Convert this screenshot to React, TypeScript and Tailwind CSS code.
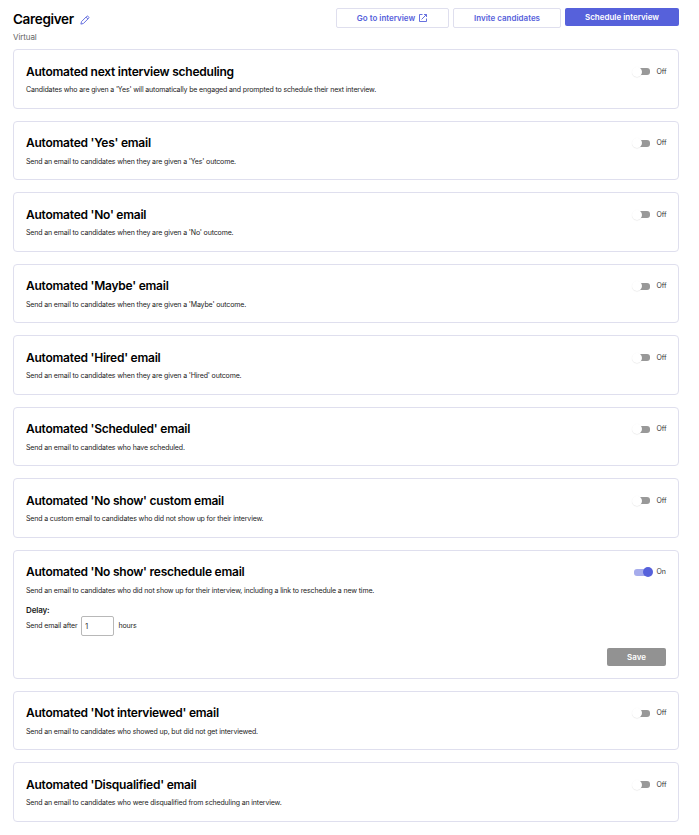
import { useState } from "react";

interface Automation {
  title: string;
  description: string;
  enabled?: boolean;
  delay?: string;
}

const automations: Automation[] = [
  {
    title: "Automated next interview scheduling",
    description:
      "Candidates who are given a 'Yes' will automatically be engaged and prompted to schedule their next interview.",
  },
  {
    title: "Automated 'Yes' email",
    description: "Send an email to candidates when they are given a 'Yes' outcome.",
  },
  {
    title: "Automated 'No' email",
    description: "Send an email to candidates when they are given a 'No' outcome.",
  },
  {
    title: "Automated 'Maybe' email",
    description: "Send an email to candidates when they are given a 'Maybe' outcome.",
  },
  {
    title: "Automated 'Hired' email",
    description: "Send an email to candidates when they are given a 'Hired' outcome.",
  },
  {
    title: "Automated 'Scheduled' email",
    description: "Send an email to candidates who have scheduled.",
  },
  {
    title: "Automated 'No show' custom email",
    description: "Send a custom email to candidates who did not show up for their interview.",
  },
  {
    title: "Automated 'No show' reschedule email",
    description:
      "Send an email to candidates who did not show up for their interview, including a link to reschedule a new time.",
    enabled: true,
    delay: "1",
  },
  {
    title: "Automated 'Not interviewed' email",
    description: "Send an email to candidates who showed up, but did not get interviewed.",
  },
  {
    title: "Automated 'Disqualified' email",
    description: "Send an email to candidates who were disqualified from scheduling an interview.",
  },
];

function PencilIcon() {
  return (
    <svg viewBox="0 0 10 10" className="w-[10px] h-[10px]" fill="none" stroke="#5661db" strokeWidth="0.9" strokeLinejoin="round" aria-hidden="true">
      <path d="M.9 9.1 1.5 6.6 6.7 1.4a1.1 1.1 0 0 1 1.5 0l.4.4a1.1 1.1 0 0 1 0 1.5L3.4 8.5Z" />
      <path d="M6 2.1 7.9 4" />
    </svg>
  );
}

function OpenIcon() {
  return (
    <svg viewBox="0 0 8 8" className="w-2 h-2" fill="none" stroke="#5661db" strokeWidth="0.9" aria-hidden="true">
      <path d="M3.5.5h-3v7h7v-3" />
      <path d="M5 .5h2.5V3M7.5.5 2.6 5.4" />
    </svg>
  );
}

function Toggle({ on, onClick }: { on: boolean; onClick: () => void }) {
  return (
    <button type="button" role="switch" aria-checked={on} onClick={onClick} className="flex items-center h-[10px] cursor-pointer">
      <span className={`flex items-center w-4 h-[7px] rounded-[3px] ${on ? "bg-[#a6acec] justify-end" : "bg-[#999999]"}`}>
        <span
          className={`w-[10px] h-[10px] shrink-0 rounded-full ${
            on ? "bg-[#5661db] -mr-[3px]" : "bg-white -ml-[2.5px] shadow-[0_0.5px_1px_rgba(0,0,0,0.12)]"
          }`}
        />
      </span>
      <span className="ml-[6.5px] w-[9.5px] text-[7px] leading-[10px] tracking-[-0.14px] text-left text-[#333333] whitespace-nowrap">
        {on ? "On" : "Off"}
      </span>
    </button>
  );
}

function AutomationCard({ title, description, enabled = false, delay }: Automation) {
  const [on, setOn] = useState(enabled);
  const [hours, setHours] = useState(delay ?? "");

  return (
    <section className={`border border-[#dfdfee] rounded-[4px] px-3 pt-[13.6px] ${delay ? "h-[129px]" : "h-[59.5px]"}`}>
      <div className="flex justify-between">
        <h2 className="text-[12px] leading-4 font-semibold tracking-[-0.24px] text-black">{title}</h2>
        <div className="pt-[2.9px]">
          <Toggle on={on} onClick={() => setOn(!on)} />
        </div>
      </div>
      <p className="mt-[5.4px] text-[7px] leading-[10px] tracking-[-0.142px] text-[#222222]">{description}</p>

      {delay && (
        <>
          <div className="mt-[9px] text-[8px] leading-[11px] font-semibold tracking-[-0.15px] text-[#222222]">Delay:</div>
          <div className="flex items-center text-[7px] tracking-[-0.142px] text-[#222222]">
            <span className="w-[55px]">Send email after</span>
            <input
              value={hours}
              onChange={(e) => setHours(e.target.value)}
              className="w-[33px] h-5 px-[3px] text-[8px] text-[#444444] border border-[#b8b8b8] rounded-[2px] outline-none"
            />
            <span className="ml-[4.5px]">hours</span>
          </div>
          <div className="flex justify-end mt-3">
            <button type="button" className="w-[59px] h-[18px] rounded-[2px] bg-[#929292] text-white text-[8px] font-semibold">
              Save
            </button>
          </div>
        </>
      )}
    </section>
  );
}

export default function App() {
  return (
    <main className="h-[835px] bg-white pl-[13px] pr-5 pt-2 font-['Inter',sans-serif] overflow-hidden">
      {/* Header */}
      <header className="flex justify-between h-[41.3px]">
        <div>
          <div className="flex items-center gap-[6px] h-[23px]">
            <h1 className="text-[13.5px] font-semibold tracking-[-0.33px] text-black">Caregiver</h1>
            <PencilIcon />
          </div>
          <div className="text-[8px] leading-3 tracking-[-0.1px] text-[#666666]">Virtual</div>
        </div>

        <div className="flex items-start gap-1 text-[8px] font-semibold text-[#5661db]">
          <button type="button" className="flex items-center justify-center gap-1 w-[113px] h-5 pr-px border border-[#dfdfee] rounded-[2px]">
            Go to interview
            <OpenIcon />
          </button>
          <button type="button" className="w-[108px] h-5 border border-[#dfdfee] rounded-[2px]">
            Invite candidates
          </button>
          <button type="button" className="w-[114px] h-[18px] rounded-[2px] bg-[#5661db] text-white">
            Schedule interview
          </button>
        </div>
      </header>

      {/* Automations */}
      <div className="flex flex-col gap-3">
        {automations.map((automation) => (
          <AutomationCard key={automation.title} {...automation} />
        ))}
      </div>
    </main>
  );
}
